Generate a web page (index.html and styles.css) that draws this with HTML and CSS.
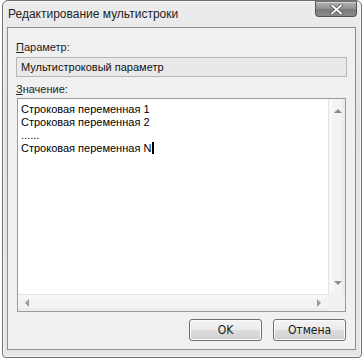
FILE: index.html
```html
<!DOCTYPE html>
<html lang="ru">

<head>
    <meta charset="UTF-8">
    <meta name="viewport" content="width=device-width, initial-scale=1.0">
    <title>Редактирование мультистроки</title>
    <link rel="stylesheet" href="styles.css">
</head>

<body>
    <div class="window">
        <!-- Title bar -->
        <div class="title-bar">
            <span class="title">Редактирование мультистроки</span>
            <button class="close-btn" aria-label="Закрыть">
                <svg width="13" height="11" viewBox="0 0 13 11">
                    <path d="M2 1.5 L11 9.5 M11 1.5 L2 9.5" stroke="#555" stroke-width="3.4" stroke-linecap="square" fill="none" />
                    <path d="M2 1.5 L11 9.5 M11 1.5 L2 9.5" stroke="#fff" stroke-width="1.8" stroke-linecap="square" fill="none" />
                </svg>
            </button>
        </div>

        <!-- Client area -->
        <div class="client">
            <div class="field-label"><u>П</u>араметр:</div>
            <div class="readonly-field">Мультистроковый параметр</div>

            <div class="field-label value-label"><u>З</u>начение:</div>
            <div class="memo">
                <div class="memo-text">
                    <div>Строковая переменная 1</div>
                    <div>Строковая переменная 2</div>
                    <div>......</div>
                    <div>Строковая переменная N<span class="caret"></span></div>
                </div>
                <div class="vscroll">
                    <span class="arrow arrow-up"></span>
                    <span class="arrow arrow-down"></span>
                </div>
                <div class="hscroll">
                    <span class="arrow arrow-left"></span>
                    <span class="arrow arrow-right"></span>
                </div>
                <div class="scroll-corner"></div>
            </div>

            <div class="buttons">
                <button class="dlg-btn">OK</button>
                <button class="dlg-btn">Отмена</button>
            </div>
        </div>
    </div>
</body>

</html>
```

FILE: styles.css
```css
body {
    margin: 0;
    background-color: #fff;
    font-family: "Liberation Sans", Arial, sans-serif;
}

/* Window frame */
.window {
    width: 360px;
    height: 358px;
    margin-left: 2px;
    box-sizing: border-box;
    padding: 0 5px 7px 4px;
    border: 1px solid #6f6f6f;
    border-radius: 6px 6px 4px 4px;
    background: linear-gradient(#ececec, #e3e3e3 30%, #e6e6e6);
    box-shadow: inset 0 0 0 1px #f6f6f6;
}

/* Title bar */
.title-bar {
    height: 26px;
    display: flex;
    justify-content: space-between;
    align-items: flex-start;
}

.title {
    padding-top: 6px;
    padding-left: 1px;
    font-size: 12px;
    line-height: 14px;
    color: #1e1e1e;
}

.close-btn {
    width: 42px;
    height: 16px;
    margin-right: -1px;
    padding: 0;
    border: 1px solid #555;
    border-top-color: #777;
    border-radius: 0 0 4px 4px;
    background: linear-gradient(#b4b4b4, #949494 45%, #7a7a7a 55%, #8a8a8a);
    box-shadow: inset 0 1px 0 rgba(255, 255, 255, 0.4);
    display: flex;
    justify-content: center;
    align-items: center;
}

/* Client area */
.client {
    height: 323px;
    box-sizing: border-box;
    padding: 13px 8px 8px 8px;
    border: 1px solid #8e8e8e;
    background-color: #f0f0f0;
    font-size: 11px;
    line-height: 13px;
}

.field-label {
    color: #222;
    margin-bottom: 3px;
}

.value-label {
    margin-top: 6px;
    margin-bottom: 2px;
}

.readonly-field {
    height: 20px;
    box-sizing: border-box;
    padding: 0 4px;
    border: 1px solid #b7b7b7;
    background-color: #e9e9e9;
    color: #111;
    display: flex;
    align-items: center;
}

/* Multiline edit */
.memo {
    height: 214px;
    margin: 0 1px;
    box-sizing: border-box;
    border: 1px solid #9a9a9a;
    background-color: #fff;
    display: grid;
    grid-template-columns: 1fr 17px;
    grid-template-rows: 1fr 17px;
}

.memo-text {
    padding: 4px 3px;
    color: #000;
}

.caret {
    display: inline-block;
    width: 2px;
    height: 12px;
    margin-left: 1px;
    background-color: #000;
    vertical-align: -2px;
}

.vscroll,
.hscroll {
    position: relative;
    background-color: #f3f3f3;
}

.vscroll {
    border-left: 1px solid #e2e2e2;
    box-shadow: inset 4px 0 0 #f8f8f8, inset -3px 0 0 #ececec;
}

.hscroll {
    border-top: 1px solid #e2e2e2;
    box-shadow: inset 0 4px 0 #f8f8f8, inset 0 -3px 0 #ececec;
}

.scroll-corner {
    background-color: #f0f0f0;
}

/* Scroll arrows */
.arrow {
    position: absolute;
    width: 0;
    height: 0;
}

.arrow-up {
    top: 10px;
    left: 5px;
    border-left: 4px solid transparent;
    border-right: 4px solid transparent;
    border-bottom: 4px solid #8c8c8c;
}

.arrow-down {
    bottom: 9px;
    left: 5px;
    border-left: 4px solid transparent;
    border-right: 4px solid transparent;
    border-top: 4px solid #8c8c8c;
}

.arrow-left {
    top: 4px;
    left: 7px;
    border-top: 4px solid transparent;
    border-bottom: 4px solid transparent;
    border-right: 4px solid #9a9a9a;
}

.arrow-right {
    top: 4px;
    right: 7px;
    border-top: 4px solid transparent;
    border-bottom: 4px solid transparent;
    border-left: 4px solid #9a9a9a;
}

/* Buttons */
.buttons {
    display: flex;
    justify-content: flex-end;
    gap: 11px;
    margin-top: 7px;
    padding-right: 1px;
}

.dlg-btn {
    width: 73px;
    height: 22px;
    padding: 0;
    border: 1px solid #707070;
    border-radius: 3px;
    background: linear-gradient(#f3f3f3, #ebebeb 48%, #dddddd 52%, #cfcfcf);
    box-shadow: inset 0 0 0 1px #fbfbfb;
    font-family: "DejaVu Sans Condensed", "Liberation Sans", sans-serif;
    font-size: 12px;
    color: #1a1a1a;
}
```
